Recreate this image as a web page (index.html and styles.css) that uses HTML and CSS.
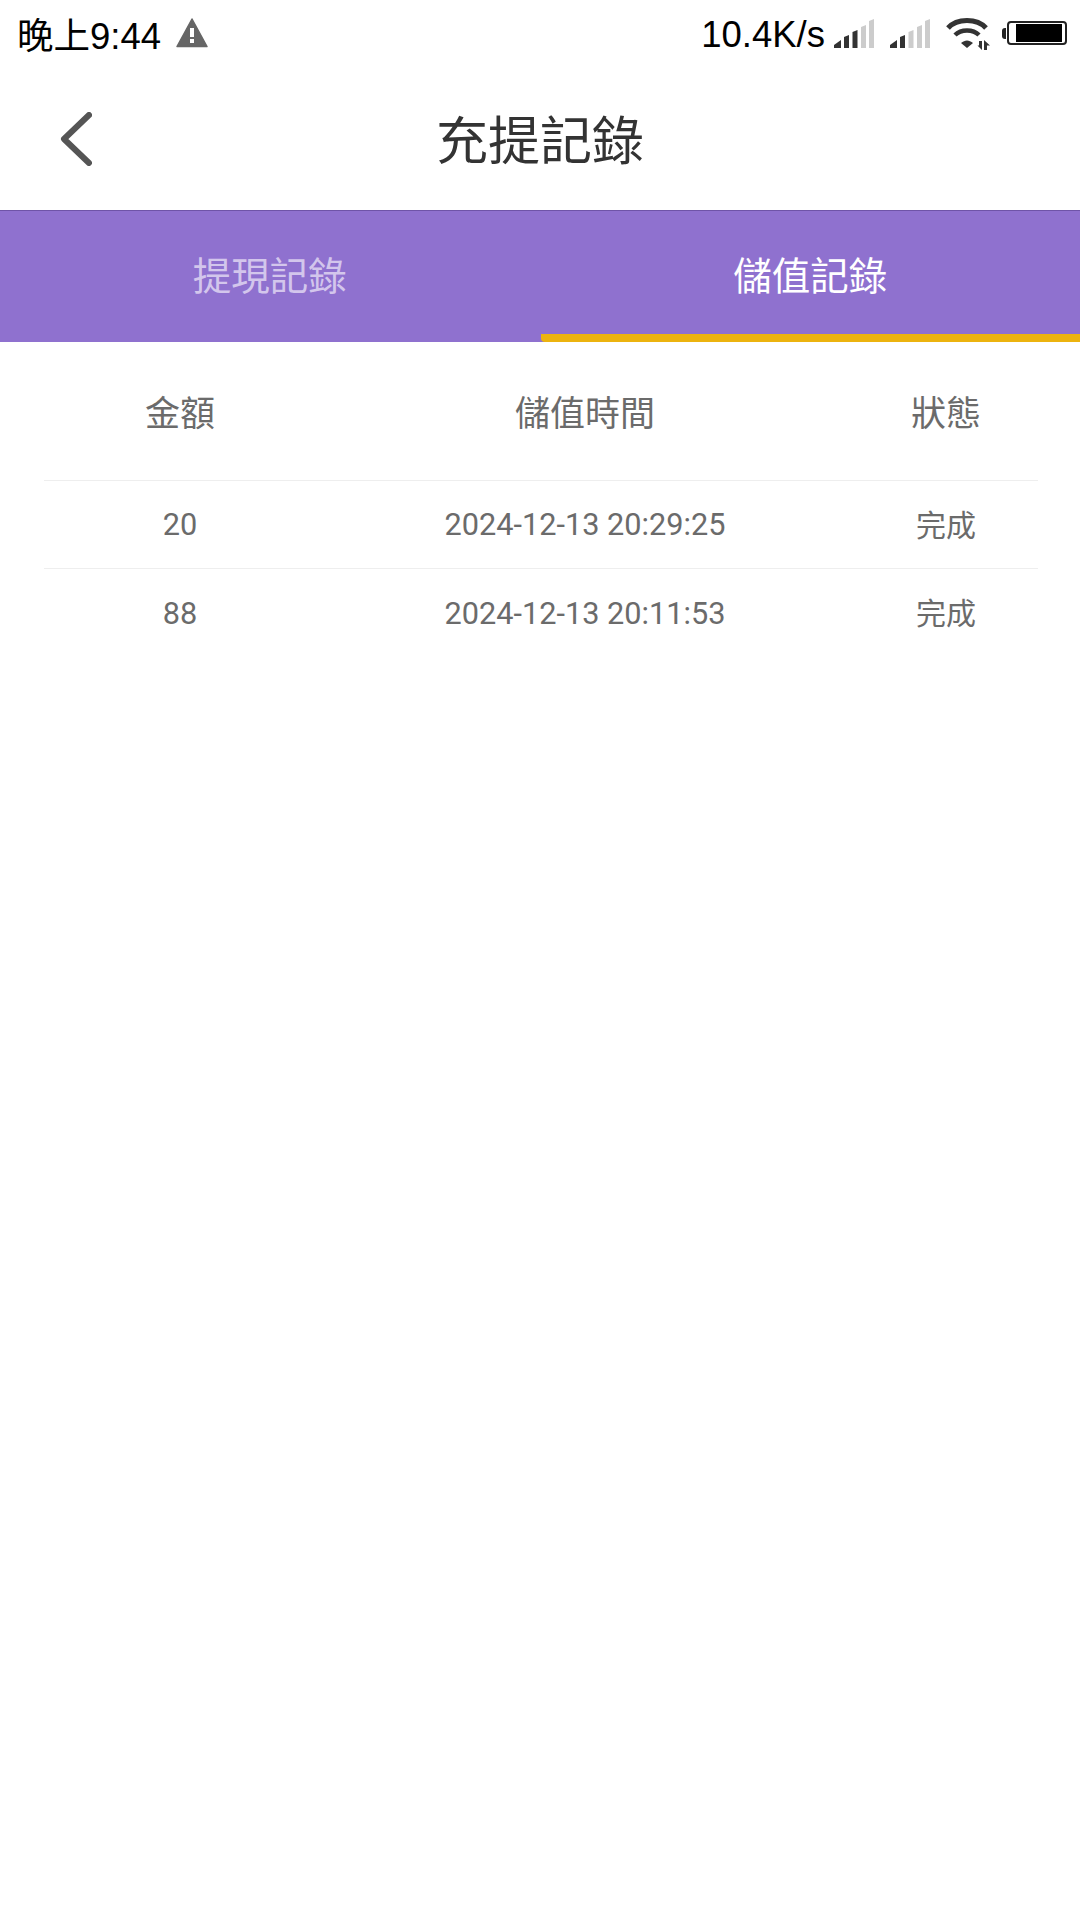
FILE: index.html
```html
<!DOCTYPE html>
<html lang="zh-Hant">
<head>
  <meta charset="UTF-8" />
  <meta name="viewport" content="width=device-width, initial-scale=1.0"/>
  <title>充提記錄</title>
  <link rel="stylesheet" href="styles.css">
</head>
<body>
  <div class="status-bar">
    <div class="status-left">
      <span class="clock">晚上9:44</span>
      <svg class="alert-icon" width="32" height="30" viewBox="0 0 32 30">
        <path d="M16 1 L31 28.500 H1 Z" fill="#666" stroke="#666" stroke-width="1.500" stroke-linejoin="round"/>
        <rect x="14" y="10" width="4" height="9" fill="#fff"/>
        <rect x="14" y="21" width="4" height="4" fill="#fff"/>
      </svg>
    </div>
    <div class="status-right">
      <span class="speed">10.4K/s</span>
      <svg class="signal-icon" width="40" height="29" viewBox="0 0 40 29">
        <path d="M0 29 V26 L7 21 V29 Z" fill="#333"/>
        <path d="M10 29 V18 L15 16 V29 Z" fill="#333"/>
        <path d="M18.500 29 V13 L23.500 11 V29 Z" fill="#333"/>
        <path d="M27 29 V8 L32 6 V29 Z" fill="#ccc"/>
        <path d="M35 29 V2 L40 0 V29 Z" fill="#ccc"/>
      </svg>
      <svg class="signal-icon sim2" width="40" height="29" viewBox="0 0 40 29">
        <path d="M0 29 V26 L7 21 V29 Z" fill="#333"/>
        <path d="M10 29 V18 L15 16 V29 Z" fill="#333"/>
        <path d="M18.500 29 V13 L23.500 11 V29 Z" fill="#ccc"/>
        <path d="M27 29 V8 L32 6 V29 Z" fill="#ccc"/>
        <path d="M35 29 V2 L40 0 V29 Z" fill="#ccc"/>
      </svg>
      <svg class="wifi-icon" width="44" height="33" viewBox="0 0 44 33">
        <path d="M2 11 C11 1 31 1 40 11" fill="none" stroke="#333" stroke-width="5"/>
        <path d="M9 18 C15 12 27 12 33 18" fill="none" stroke="#333" stroke-width="4.500"/>
        <path d="M15 26 C19 22.500 23 22.500 27 26 L21 31 Z" fill="#333"/>
        <path d="M33 24 H36 V33 L31.500 28.500 H33 Z M38 33 H41 V28.500 H44 L38 23 Z" fill="#333"/>
      </svg>
      <div class="battery">
        <span class="battery-nub"></span>
        <span class="battery-body"><span class="battery-fill"></span></span>
      </div>
    </div>
  </div>

  <header class="title-bar">
    <svg class="back-icon" width="32" height="54" viewBox="0 0 32 54">
      <path d="M29 3 L4 27 L29 51" fill="none" stroke="#555" stroke-width="6" stroke-linecap="round" stroke-linejoin="round"/>
    </svg>
    <h1>充提記錄</h1>
  </header>

  <nav class="tabs">
    <div class="tab">提現記錄</div>
    <div class="tab active">儲值記錄</div>
  </nav>

  <main class="records">
    <div class="row head">
      <div>金額</div>
      <div>儲值時間</div>
      <div>狀態</div>
    </div>
    <div class="row">
      <div>20</div>
      <div>2024-12-13 20:29:25</div>
      <div class="state">完成</div>
    </div>
    <div class="row">
      <div>88</div>
      <div>2024-12-13 20:11:53</div>
      <div class="state">完成</div>
    </div>
  </main>
</body>
</html>
```

FILE: styles.css
```css
* {
  box-sizing: border-box;
}

body {
  font-family: Roboto, "Noto Sans CJK TC", sans-serif;
  margin: 0;
  width: 1080px;
  height: 1920px;
  background: #fff;
  overflow: hidden;
}

.status-bar {
  height: 66px;
  padding: 0 13px 0 17px;
  display: flex;
  justify-content: space-between;
  align-items: center;
  color: #000;
  font-family: "Liberation Sans", "Noto Sans CJK TC", sans-serif;
}

.status-left,
.status-right {
  display: flex;
  align-items: center;
}

.clock {
  font-size: 36.500px;
}

.speed {
  font-size: 36.500px;
  margin-top: 4px;
}

.alert-icon {
  margin-left: 15px;
}

.signal-icon {
  margin-left: 9px;
  margin-top: 1px;
}

.signal-icon.sim2 {
  margin-left: 16px;
}

.wifi-icon {
  margin-left: 16px;
}

.battery {
  margin-left: 12px;
  display: flex;
  align-items: center;
}

.battery-nub {
  width: 4px;
  height: 11px;
  background: #222;
  border-radius: 3px 0 0 3px;
}

.battery-body {
  width: 60px;
  height: 24px;
  margin-left: 1px;
  padding: 1px 3px 1px 7px;
  border: 2px solid #222;
  border-radius: 4px;
}

.battery-fill {
  display: block;
  height: 100%;
  background: #000;
}

.title-bar {
  height: 144px;
  position: relative;
  display: flex;
  align-items: center;
  justify-content: center;
}

.title-bar h1 {
  margin: 0 0 2px;
  font-size: 52px;
  font-weight: 400;
  color: #333;
}

.back-icon {
  position: absolute;
  left: 60px;
  top: 46px;
}

.tabs {
  height: 132px;
  display: flex;
  background: #8f71cf;
  border-top: 1px solid #6f54a8;
}

.tab {
  flex: 1;
  display: flex;
  align-items: center;
  justify-content: center;
  padding-bottom: 8px;
  font-size: 38.500px;
  color: #d3c6ec;
}

.tab.active {
  margin-left: 1px;
  color: #fff;
  border-bottom: 8px solid #ecb30f;
  border-bottom-left-radius: 4px;
  padding-bottom: 0;
}

.records {
  padding: 0 42px 0 44px;
}

.row {
  display: grid;
  grid-template-columns: 272px 538px 1fr;
  height: 88px;
  align-items: center;
  text-align: center;
  font-size: 30.700px;
  color: #6b6b6b;
  border-bottom: 1px solid #eee;
}

.row:last-child {
  border-bottom: none;
}

.row.head {
  height: 139px;
  padding-bottom: 2px;
  font-size: 35px;
}

.state {
  font-size: 30px;
  margin-bottom: 4px;
}
```
